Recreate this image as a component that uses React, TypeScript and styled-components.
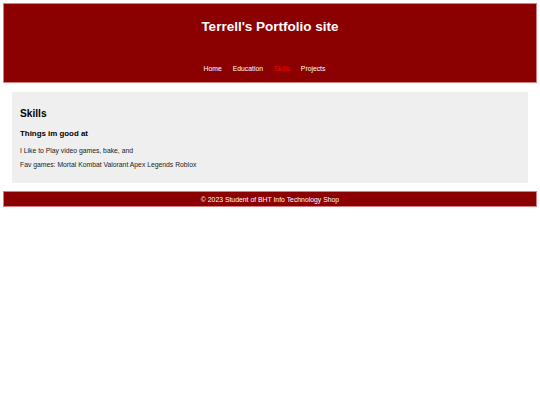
import styled, { createGlobalStyle } from "styled-components";

const GlobalStyle = createGlobalStyle`
  html, body {
    margin: 0;
    padding: 0;
    background: #ffffff;
  }
  body {
    padding: 3px;
    font-family: "Liberation Sans", Arial, sans-serif;
  }
`;

const Header = styled.header`
  background-color: #8b0000;
  border: 1px solid #d08080;
  height: 78px;
  display: flex;
  flex-direction: column;
  align-items: center;
  h1 {
    margin: 14px 0 0;
    font-size: 13.5px;
    line-height: 18px;
    color: #ffffff;
    font-weight: 700;
  }
`;

const Nav = styled.nav`
  margin-top: 28px;
  display: flex;
`;

const NavLink = styled.a<{ $active?: boolean }>`
  margin-right: 11px;
  font-size: 6.8px;
  line-height: 9px;
  color: ${(p) => (p.$active ? "#ff0000" : "#ffffff")};
  text-decoration: none;
`;

const Section = styled.section`
  margin: 9px 9px 0;
  background: #efefef;
  padding: 16px 8px 14px;
  h2 {
    margin: 0 0 9px;
    font-size: 10.2px;
    line-height: 12px;
    font-weight: 700;
    color: #000;
  }
  h3 {
    margin: 0 0 8px;
    font-size: 7.9px;
    line-height: 10px;
    font-weight: 700;
    color: #000;
  }
  p {
    margin: 0 0 6px;
    font-size: 6.8px;
    line-height: 8px;
    color: #222;
  }
  p:last-child {
    margin-bottom: 0;
  }
`;

const Footer = styled.footer`
  margin-top: 8px;
  background-color: #8b0000;
  border: 1px solid #d08080;
  height: 14px;
  display: flex;
  align-items: center;
  justify-content: center;
  font-size: 6.85px;
  color: #ffffff;
`;

const links = ["Home", "Education", "Skills", "Projects"];

const App = () => {
  return (
    <>
      <GlobalStyle />
      <Header>
        <h1>Terrell's Portfolio site</h1>
        <Nav>
          {links.map((l) => (
            <NavLink key={l} href="#" $active={l === "Skills"}>
              {l}
            </NavLink>
          ))}
        </Nav>
      </Header>
      <Section>
        <h2>Skills</h2>
        <h3>Things im good at</h3>
        <p>I Like to Play video games, bake, and</p>
        <p>Fav games: Mortal Kombat Valorant Apex Legends Roblox</p>
      </Section>
      <Footer>© 2023 Student of BHT Info Technology Shop</Footer>
    </>
  );
};

export default App;
